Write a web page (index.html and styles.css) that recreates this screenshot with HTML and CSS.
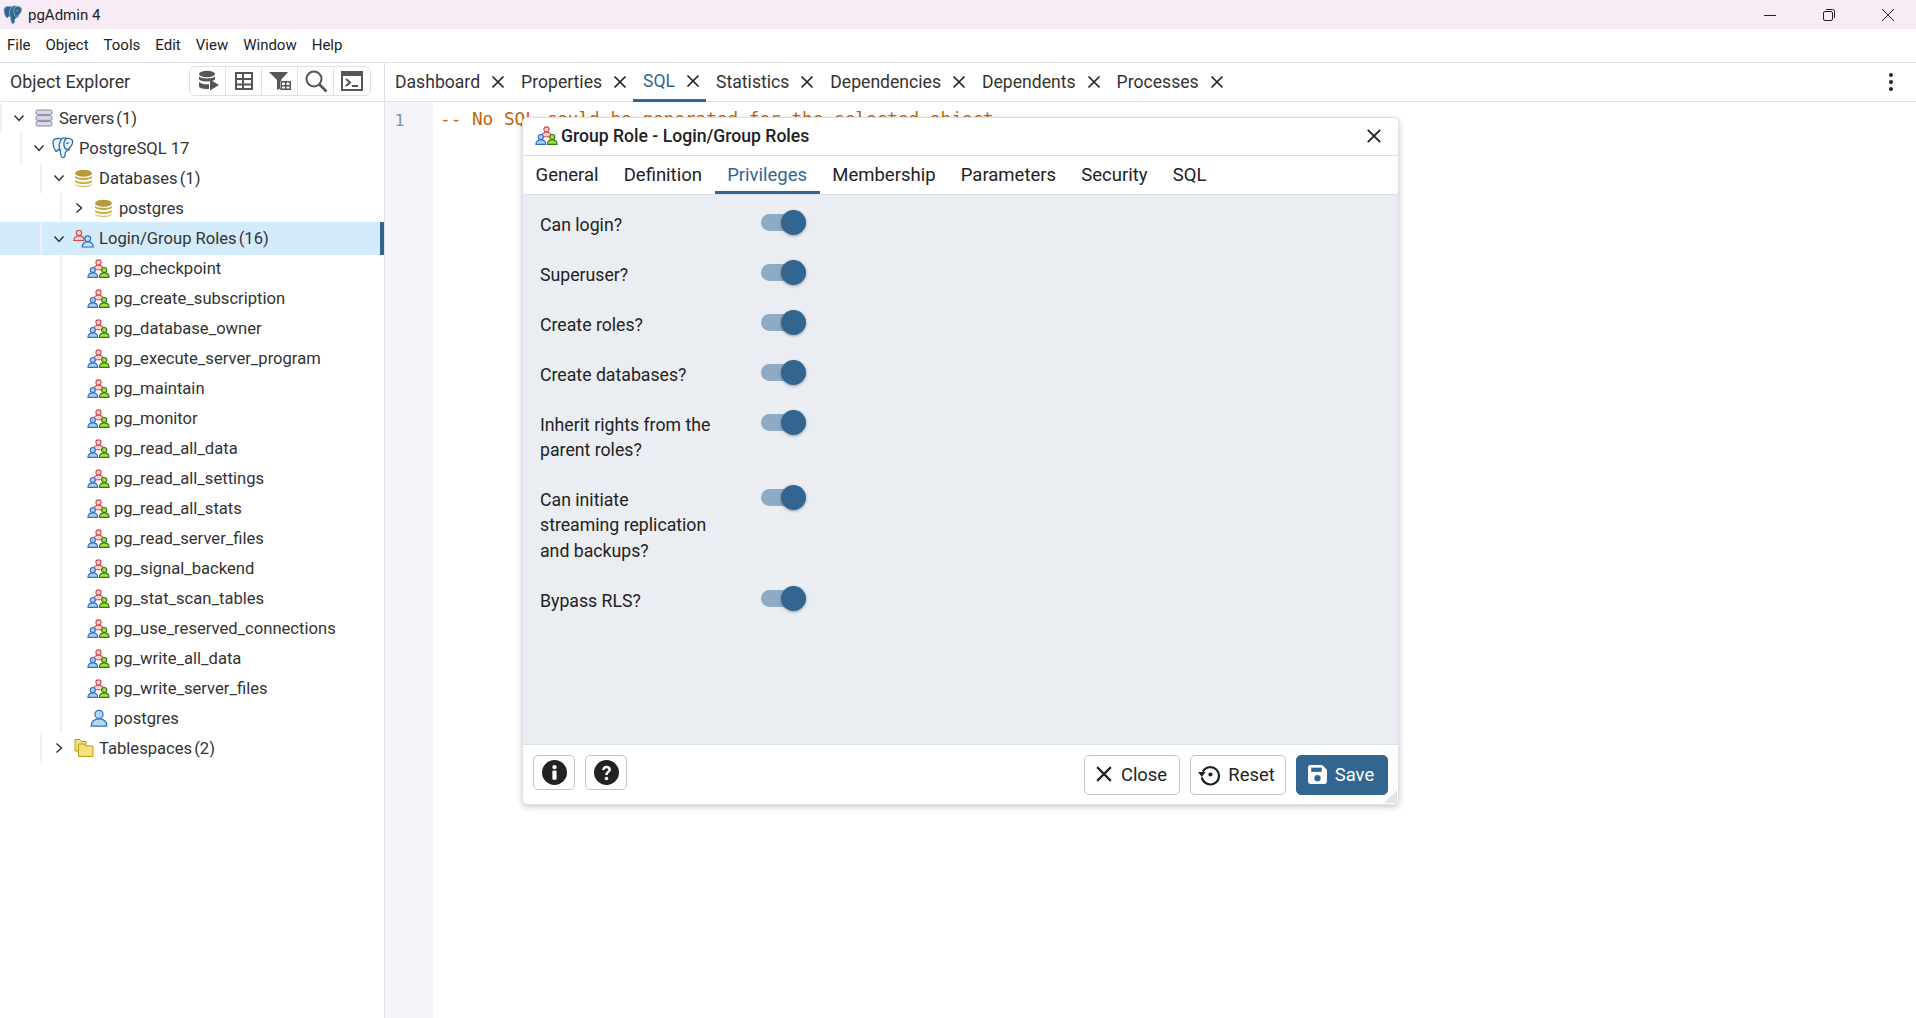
FILE: index.html
```html
<!DOCTYPE html>
<html lang="en">
<head>
    <meta charset="UTF-8">
    <title>pgAdmin 4</title>
    <link rel="stylesheet" href="styles.css">
</head>
<body>
    <!-- Shared icons -->
    <svg class="defs" width="0" height="0">
        <symbol id="i-x" viewBox="0 0 16 16"><path d="M2.5 2.5L13.5 13.5M13.5 2.5L2.5 13.5" fill="none" stroke="currentColor" stroke-width="1.7"/></symbol>
        <symbol id="i-down" viewBox="0 0 14 14"><path d="M2.5 4.5L7 9.5L11.5 4.5" fill="none" stroke="#333" stroke-width="1.5"/></symbol>
        <symbol id="i-right" viewBox="0 0 14 14"><path d="M4.5 2.5L9.5 7L4.5 11.5" fill="none" stroke="#333" stroke-width="1.5"/></symbol>
        <symbol id="i-person" viewBox="0 0 12 12">
            <circle cx="6" cy="3.6" r="2.7"/>
            <path d="M.8 11.4C.8 8.2 3 6.6 6 6.6S11.2 8.2 11.2 11.4Z"/>
        </symbol>
        <symbol id="i-group" viewBox="0 0 24 20">
            <use href="#i-person" x="6" y="0" width="12" height="12" fill="#f6d3d3" stroke="#d5494d" stroke-width="1.2"/>
            <use href="#i-person" x="0" y="8" width="12" height="12" fill="#a9cdf0" stroke="#2f6fc0" stroke-width="1.2"/>
            <use href="#i-person" x="12" y="8" width="12" height="12" fill="#a5dc3c" stroke="#2f7d12" stroke-width="1.2"/>
        </symbol>
        <symbol id="i-login" viewBox="0 0 24 20">
            <use href="#i-person" x="0" y="0" width="13" height="13" fill="#f6d3d3" stroke="#d5494d" stroke-width="1.2"/>
            <use href="#i-person" x="9" y="6" width="14" height="14" fill="#c8e2f8" stroke="#2f6fc0" stroke-width="1.2"/>
        </symbol>
        <symbol id="i-db" viewBox="0 0 18 18">
            <ellipse cx="9" cy="4" rx="8" ry="3.4" fill="#b79a3a"/>
            <path d="M1 6.6C3 9 15 9 17 6.6V8.4C15 11 3 11 1 8.4Z" fill="#c3a740"/>
            <path d="M1 10.4C3 12.8 15 12.8 17 10.4V12.2C15 14.8 3 14.8 1 12.2Z" fill="#cdb24a"/>
            <path d="M1 14C3 16.4 15 16.4 17 14V14.8C15 18 3 18 1 14.8Z" fill="#d8c060"/>
        </symbol>
        <symbol id="i-elephant" viewBox="0 0 22 22">
            <path d="M5 1.5C2.4 1.5 1 3.4 1 6C1 9 2.6 12.5 3.6 13.8C4.4 14.8 5.6 14 6.2 12.6C6.8 13.4 7.6 13.6 8.4 13.4C8.4 16 8.6 20 10.6 20.6C12.4 21 13 19.4 13 17.4C13 15.8 13.2 14.8 14.6 14.2C17 13.2 17.6 12.8 16.8 12C18.8 9.8 21 6.4 20.6 4C20.2 2 17.4 1 14.8 1.4C13 .7 11 .8 9.6 1.8C8.2 1.4 6.4 1.3 5 1.5Z"/>
            <path d="M8.4 13.4C6.4 10 6.8 6 9.6 1.8M14.8 1.4C11.6 3 11 8 13 11.4C13.8 12.6 15.2 12.6 16.8 12M16.6 5.6L14.2 6.6" fill="none"/>
        </symbol>
        <symbol id="i-save" viewBox="0 0 20 20"><path d="M2.5 1H14.5L19 5.5V17A2 2 0 0 1 17 19H3A2 2 0 0 1 1 17V3A2 2 0 0 1 2.5 1Z" fill="#fff"/><rect x="4" y="3.5" width="10" height="4" fill="#326690"/><circle cx="10" cy="13.5" r="3" fill="#326690"/></symbol>
    </svg>

    <div class="title-bar">
        <div class="app-name">
            <svg class="app-logo"><use href="#i-elephant" fill="#326690" stroke="#9fc0d8" stroke-width="0.8"/></svg>
            <span>pgAdmin 4</span>
        </div>
        <div class="win-controls">
            <svg viewBox="0 0 12 12"><path d="M0 6.5H12" stroke="#222" stroke-width="1"/></svg>
            <svg viewBox="0 0 12 12"><rect x=".5" y="2.5" width="9" height="9" rx="1.5" fill="none" stroke="#222"/><path d="M3 .5H9.5A2 2 0 0 1 11.5 2.5V9" fill="none" stroke="#222"/></svg>
            <svg viewBox="0 0 12 12"><path d="M0 0L12 12M12 0L0 12" stroke="#222" stroke-width="1"/></svg>
        </div>
    </div>

    <div class="menu-bar">
        <span>File</span><span>Object</span><span>Tools</span><span>Edit</span><span>View</span><span>Window</span><span>Help</span>
    </div>

    <div class="workspace">
        <!-- Object Explorer -->
        <aside class="explorer">
            <div class="explorer-head">
                <span class="explorer-title">Object Explorer</span>
                <div class="tool-group">
                    <button><svg viewBox="0 0 24 24"><ellipse cx="11" cy="5" rx="8" ry="3.2"/><path d="M3 7.5C5 10 17 10 19 7.5V10.5C17 13 5 13 3 10.5ZM3 13C5 15.4 11 15.6 13 15V19.8C9 20.4 4.5 19.6 3 18ZM14 10.5L23 16L14 21.5Z"/></svg></button>
                    <button><svg viewBox="0 0 24 24"><path d="M3 3H21V21H3ZM5 5V9H10V5ZM12 5V9H19V5ZM5 11V14.5H10V11ZM12 11V14.5H19V11ZM5 16.5V19H10V16.5ZM12 16.5V19H19V16.5Z" fill-rule="evenodd"/></svg></button>
                    <button><svg viewBox="0 0 24 24"><path d="M1 3H20L13 11V19L9 21V11ZM12.5 12H23V21H12.5ZM14 13.5V16H17V13.5ZM18.5 13.5V16H21.5V13.5ZM14 17.5V19.5H17V17.5ZM18.5 17.5V19.5H21.5V17.5Z" fill-rule="evenodd"/></svg></button>
                    <button><svg viewBox="0 0 24 24"><circle cx="10" cy="10" r="7.5" fill="none" stroke="#555" stroke-width="2"/><path d="M15.5 15.5L22.5 22.5" stroke="#555" stroke-width="2.6"/></svg></button>
                    <button><svg viewBox="0 0 24 24"><path d="M1 2H23V22H1ZM3 7V20H21V7Z" fill-rule="evenodd"/><path d="M6 10L10 13.5L6 17" fill="none" stroke="#555" stroke-width="2"/><path d="M12 17H18" stroke="#555" stroke-width="2"/></svg></button>
                </div>
            </div>
            <div class="tree">
                <div class="row"><div class="node lv0">
                    <svg class="chev"><use href="#i-down"/></svg>
                    <svg class="ico ico-servers" viewBox="0 0 18 18"><g fill="#d8d8e6" stroke="#85859f"><rect x="1" y="1" width="16" height="4.6" rx="1.5"/><rect x="1" y="6.7" width="16" height="4.6" rx="1.5"/><rect x="1" y="12.4" width="16" height="4.6" rx="1.5"/></g></svg>
                    <span class="label">Servers</span><span class="count">(1)</span>
                </div></div>
                <div class="row"><div class="node lv1">
                    <svg class="chev"><use href="#i-down"/></svg>
                    <svg class="ico ico-pg"><use href="#i-elephant" fill="#eaf3fa" stroke="#326f9f" stroke-width="1.3"/></svg>
                    <span class="label">PostgreSQL 17</span>
                </div></div>
                <div class="row"><div class="node lv2">
                    <svg class="chev"><use href="#i-down"/></svg>
                    <svg class="ico ico-db"><use href="#i-db"/></svg>
                    <span class="label">Databases</span><span class="count">(1)</span>
                </div></div>
                <div class="row"><div class="node lv3">
                    <svg class="chev"><use href="#i-right"/></svg>
                    <svg class="ico ico-db"><use href="#i-db"/></svg>
                    <span class="label">postgres</span>
                </div></div>
                <div class="row selected"><div class="node lv2">
                    <svg class="chev"><use href="#i-down"/></svg>
                    <svg class="ico ico-login"><use href="#i-login"/></svg>
                    <span class="label">Login/Group Roles</span><span class="count">(16)</span>
                </div></div>
                <div class="row"><div class="node leaf"><svg class="ico ico-group"><use href="#i-group"/></svg><span class="label">pg_checkpoint</span></div></div>
                <div class="row"><div class="node leaf"><svg class="ico ico-group"><use href="#i-group"/></svg><span class="label">pg_create_subscription</span></div></div>
                <div class="row"><div class="node leaf"><svg class="ico ico-group"><use href="#i-group"/></svg><span class="label">pg_database_owner</span></div></div>
                <div class="row"><div class="node leaf"><svg class="ico ico-group"><use href="#i-group"/></svg><span class="label">pg_execute_server_program</span></div></div>
                <div class="row"><div class="node leaf"><svg class="ico ico-group"><use href="#i-group"/></svg><span class="label">pg_maintain</span></div></div>
                <div class="row"><div class="node leaf"><svg class="ico ico-group"><use href="#i-group"/></svg><span class="label">pg_monitor</span></div></div>
                <div class="row"><div class="node leaf"><svg class="ico ico-group"><use href="#i-group"/></svg><span class="label">pg_read_all_data</span></div></div>
                <div class="row"><div class="node leaf"><svg class="ico ico-group"><use href="#i-group"/></svg><span class="label">pg_read_all_settings</span></div></div>
                <div class="row"><div class="node leaf"><svg class="ico ico-group"><use href="#i-group"/></svg><span class="label">pg_read_all_stats</span></div></div>
                <div class="row"><div class="node leaf"><svg class="ico ico-group"><use href="#i-group"/></svg><span class="label">pg_read_server_files</span></div></div>
                <div class="row"><div class="node leaf"><svg class="ico ico-group"><use href="#i-group"/></svg><span class="label">pg_signal_backend</span></div></div>
                <div class="row"><div class="node leaf"><svg class="ico ico-group"><use href="#i-group"/></svg><span class="label">pg_stat_scan_tables</span></div></div>
                <div class="row"><div class="node leaf"><svg class="ico ico-group"><use href="#i-group"/></svg><span class="label">pg_use_reserved_connections</span></div></div>
                <div class="row"><div class="node leaf"><svg class="ico ico-group"><use href="#i-group"/></svg><span class="label">pg_write_all_data</span></div></div>
                <div class="row"><div class="node leaf"><svg class="ico ico-group"><use href="#i-group"/></svg><span class="label">pg_write_server_files</span></div></div>
                <div class="row"><div class="node leaf"><svg class="ico ico-user" viewBox="0 0 12 12"><use href="#i-person" fill="#b5d8f5" stroke="#2f6fc0" stroke-width="0.8"/></svg><span class="label">postgres</span></div></div>
                <div class="row"><div class="node lv2">
                    <svg class="chev"><use href="#i-right"/></svg>
                    <svg class="ico ico-ts" viewBox="0 0 20 20"><path d="M1 1.5H6L7.5 3.5H12V13H1Z" fill="#f3e27a" stroke="#b89c20"/><path d="M4.500 6H10L11.500 8H19V18.500H4.500Z" fill="#f3e27a" stroke="#b89c20"/></svg>
                    <span class="label">Tablespaces</span><span class="count">(2)</span>
                </div></div>
            </div>
        </aside>

        <!-- Main panel -->
        <main class="main">
            <div class="tab-bar">
                <div class="tab"><span>Dashboard</span><svg><use href="#i-x"/></svg></div>
                <div class="tab"><span>Properties</span><svg><use href="#i-x"/></svg></div>
                <div class="tab active"><span>SQL</span><svg><use href="#i-x"/></svg></div>
                <div class="tab"><span>Statistics</span><svg><use href="#i-x"/></svg></div>
                <div class="tab"><span>Dependencies</span><svg><use href="#i-x"/></svg></div>
                <div class="tab"><span>Dependents</span><svg><use href="#i-x"/></svg></div>
                <div class="tab"><span>Processes</span><svg><use href="#i-x"/></svg></div>
                <div class="kebab"><i></i><i></i><i></i></div>
            </div>
            <div class="editor">
                <div class="gutter">1</div>
                <div class="code">-- No SQL could be generated for the selected object</div>
            </div>
        </main>
    </div>

    <!-- Group role dialog -->
    <div class="dialog">
        <div class="dialog-head">
            <svg class="ico ico-group"><use href="#i-group"/></svg>
            <span class="dialog-title">Group Role - Login/Group Roles</span>
            <svg class="dialog-close"><use href="#i-x"/></svg>
        </div>
        <div class="dialog-tabs">
            <span>General</span><span>Definition</span><span class="active">Privileges</span><span>Membership</span><span>Parameters</span><span>Security</span><span>SQL</span>
        </div>
        <div class="dialog-body">
            <div class="field"><label>Can login?</label><div class="switch"></div></div>
            <div class="field"><label>Superuser?</label><div class="switch"></div></div>
            <div class="field"><label>Create roles?</label><div class="switch"></div></div>
            <div class="field"><label>Create databases?</label><div class="switch"></div></div>
            <div class="field"><label>Inherit rights from the<br>parent roles?</label><div class="switch"></div></div>
            <div class="field"><label>Can initiate<br>streaming replication<br>and backups?</label><div class="switch"></div></div>
            <div class="field"><label>Bypass RLS?</label><div class="switch"></div></div>
        </div>
        <div class="dialog-foot">
            <button class="btn-icon"><svg viewBox="0 0 24 24"><circle cx="12" cy="12" r="12" fill="#222"/><rect x="10" y="10" width="4" height="9" rx="1" fill="#fff"/><circle cx="12" cy="6.800" r="2.100" fill="#fff"/></svg></button>
            <button class="btn-icon"><svg viewBox="0 0 24 24"><circle cx="12" cy="12" r="12" fill="#222"/><path d="M7.800 9.500C7.800 7 9.800 5.500 12 5.500C14.400 5.500 16.300 7 16.300 9.200C16.300 12 13.200 12 13.200 14.500H10.800C10.800 11 13.700 11 13.700 9.300C13.700 8.500 13 7.900 12 7.900C11 7.900 10.300 8.600 10.200 9.500Z" fill="#fff"/><circle cx="12" cy="17.800" r="1.700" fill="#fff"/></svg></button>
            <div class="spacer"></div>
            <button class="btn"><svg class="btn-x"><use href="#i-x"/></svg>Close</button>
            <button class="btn"><svg class="btn-reset" viewBox="0 0 24 24"><path d="M5 9A9 9 0 1 1 4 15" fill="none" stroke="#222" stroke-width="2.300"/><path d="M0 10.500H8L4 15.500Z" fill="#222" transform="translate(0 -1)"/><circle cx="13" cy="12" r="2.200" fill="#222"/></svg>Reset</button>
            <button class="btn btn-save"><svg class="btn-disk"><use href="#i-save"/></svg>Save</button>
        </div>
        <div class="resize-grip"></div>
    </div>
</body>
</html>
```
FILE: styles.css
```css
* {
    margin: 0;
    padding: 0;
    box-sizing: border-box;
    font-family: 'Roboto', sans-serif;
}

body {
    width: 1916px;
    height: 1018px;
    overflow: hidden;
    background: #fff;
    color: #222;
    display: flex;
    flex-direction: column;
}

.defs {
    position: absolute;
}

/* Title bar */
.title-bar {
    height: 29px;
    background: #f7ecf6;
    display: flex;
    justify-content: space-between;
    align-items: center;
}

.app-name {
    display: flex;
    align-items: center;
    font-size: 15px;
    color: #222;
    padding-left: 3px;
}

.app-logo {
    width: 20px;
    height: 22px;
    margin-right: 5px;
}

.win-controls {
    display: flex;
    gap: 47px;
    padding-right: 22px;
}

.win-controls svg {
    width: 12px;
    height: 12px;
}

/* Menu bar */
.menu-bar {
    height: 34px;
    padding: 0 0 1px 7px;
    border-bottom: 1px solid #dde0e6;
    display: flex;
    align-items: center;
    gap: 15px;
    font-size: 15px;
}

/* Layout */
.workspace {
    flex: 1;
    display: flex;
    min-height: 0;
}

.explorer {
    width: 385px;
    border-right: 1px solid #dde0e6;
}

.explorer-head {
    height: 39px;
    padding: 0 13px 2px 10px;
    border-bottom: 1px solid #dde0e6;
    display: flex;
    align-items: center;
    justify-content: space-between;
}

.explorer-title {
    font-size: 17.8px;
    color: #333;
}

.tool-group {
    display: flex;
    border: 1px solid #dde0e6;
    border-radius: 6px;
    height: 30px;
}

.tool-group button {
    width: 36px;
    background: none;
    border: none;
    border-right: 1px solid #dde0e6;
    display: flex;
    align-items: center;
    justify-content: center;
}

.tool-group button:last-child {
    border-right: none;
}

.tool-group svg {
    width: 24px;
    height: 24px;
    fill: #555;
}

/* Tree */
.tree {
    padding-top: 1px;
    font-size: 16.6px;
    color: #333;
}

.row {
    height: 30px;
}

.row.selected {
    height: 33px;
    margin: -1px 0 -2px;
    background: #d3ecfb;
    border-right: 4px solid #326690;
    position: relative;
}

.node {
    height: 100%;
    display: flex;
    align-items: center;
    border-left: 2px solid #eef0f4;
    position: relative;
}

.lv0 { margin-left: 0; }
.lv1 { margin-left: 20px; }
.lv2 { margin-left: 40px; }
.lv3 { margin-left: 60px; }
.leaf { margin-left: 60px; }

.chev {
    width: 14px;
    height: 14px;
    margin-left: 10px;
    flex: none;
}

.ico {
    flex: none;
}

.ico-servers { width: 18px; height: 18px; margin-left: 9px; margin-right: 6px; }
.ico-pg { width: 22px; height: 22px; margin-left: 6px; margin-right: 5px; }
.ico-db { width: 19px; height: 19px; margin-left: 8px; margin-right: 6px; }
.ico-login { width: 22px; height: 19px; margin-left: 7px; margin-right: 4px; }
.ico-group { width: 23px; height: 19px; margin-left: 25px; margin-right: 4px; }
.ico-user { width: 18px; height: 18px; margin-left: 28px; margin-right: 6px; }
.ico-ts { width: 20px; height: 20px; margin-left: 8px; margin-right: 5px; }

.count {
    margin-left: 2px;
}

/* Tabs */
.main {
    flex: 1;
    min-width: 0;
    display: flex;
    flex-direction: column;
}

.tab-bar {
    height: 39px;
    border-bottom: 1px solid #dde0e6;
    display: flex;
    font-size: 17.6px;
    color: #333;
}

.tab {
    display: flex;
    align-items: center;
    padding: 0 5px 2px 10px;
    gap: 10px;
    height: 39px;
}

.tab svg {
    width: 16px;
    height: 16px;
    color: #222;
}

.tab.active {
    color: #326690;
    border-bottom: 3px solid #326690;
    padding-bottom: 0;
}

.kebab {
    margin-left: auto;
    margin-right: 23px;
    display: flex;
    flex-direction: column;
    justify-content: center;
    gap: 3px;
}

.kebab i {
    width: 4px;
    height: 4px;
    border-radius: 50%;
    background: #222;
}

/* Editor */
.editor {
    flex: 1;
    display: flex;
}

.gutter {
    width: 48px;
    background: #f3f5f9;
    font: 15.4px 'DejaVu Sans Mono', monospace;
    color: #7f8ca0;
    padding: 10px 0 0 10px;
}

.code {
    padding: 7px 0 0 7px;
    font: 17.7px 'DejaVu Sans Mono', monospace;
    color: #b9670f;
    white-space: pre;
}

/* Dialog */
.dialog {
    position: absolute;
    left: 522px;
    top: 117px;
    width: 877px;
    height: 688px;
    background: #fff;
    border: 1px solid #dde0e6;
    border-radius: 5px;
    box-shadow: 0 2px 6px rgba(0, 0, 0, 0.22);
    display: flex;
    flex-direction: column;
}

.dialog-head {
    height: 38px;
    flex: none;
    padding-bottom: 2px;
    border-bottom: 1px solid #dde0e6;
    display: flex;
    align-items: center;
}

.dialog-head .ico-group {
    margin-left: 12px;
    margin-right: 3px;
}

.dialog-title {
    font-size: 17.6px;
    font-weight: 500;
    color: #222;
}

.dialog-close {
    width: 18px;
    height: 18px;
    margin-left: auto;
    margin-right: 15px;
    color: #222;
}

.dialog-tabs {
    height: 39px;
    flex: none;
    border-bottom: 1px solid #dde0e6;
    display: flex;
    font-size: 18.5px;
}

.dialog-tabs span {
    padding: 0 12.6px;
    display: flex;
    align-items: center;
    height: 38px;
}

.dialog-tabs span.active {
    color: #326690;
    border-bottom: 3px solid #326690;
    padding-top: 3px;
}

.dialog-body {
    flex: 1;
    background: #eaedf2;
    padding: 12px 17px;
    display: flex;
    flex-direction: column;
    gap: 16px;
    border-bottom: 1px solid #dde0e6;
}

.field {
    display: flex;
    align-items: flex-start;
    font-size: 17.7px;
    color: #222;
}

.field label {
    width: 221px;
    padding: 6px 0 2.4px;
    line-height: 25.5px;
}

.switch {
    width: 45px;
    height: 17px;
    margin-top: 7px;
    border-radius: 9px;
    background: #8fabc3;
    position: relative;
}

.switch::after {
    content: "";
    position: absolute;
    right: 0;
    top: -4px;
    width: 25px;
    height: 25px;
    border-radius: 50%;
    background: #326690;
    box-shadow: 0 1px 3px rgba(0, 0, 0, 0.35);
}

.dialog-foot {
    height: 59px;
    flex: none;
    display: flex;
    align-items: flex-start;
    padding: 10px 10px 0 10px;
}

.spacer {
    flex: 1;
}

.btn-icon {
    width: 42px;
    height: 35px;
    background: #fff;
    border: 1px solid #bfc6d2;
    border-radius: 5px;
    margin-right: 10px;
    display: flex;
    align-items: center;
    justify-content: center;
}

.btn-icon svg {
    width: 25px;
    height: 25px;
}

.btn {
    height: 40px;
    width: 96px;
    margin-left: 10px;
    padding: 0 3px 2px 0;
    background: #fff;
    border: 1px solid #bfc6d2;
    border-radius: 5px;
    font-size: 18.4px;
    color: #222;
    display: flex;
    align-items: center;
    justify-content: center;
    gap: 7px;
}

.btn svg {
    flex: none;
}

.btn-x {
    width: 20px;
    height: 20px;
    color: #222;
}

.btn-reset {
    width: 23px;
    height: 23px;
}

.btn-disk {
    width: 21px;
    height: 21px;
}

.btn-save {
    width: 92px;
    background: #326690;
    border-color: #326690;
    color: #fff;
}

.resize-grip {
    position: absolute;
    right: 1px;
    bottom: 1px;
    width: 0;
    height: 0;
    border-left: 13px solid transparent;
    border-bottom: 13px solid #e2e5ea;
}
```
